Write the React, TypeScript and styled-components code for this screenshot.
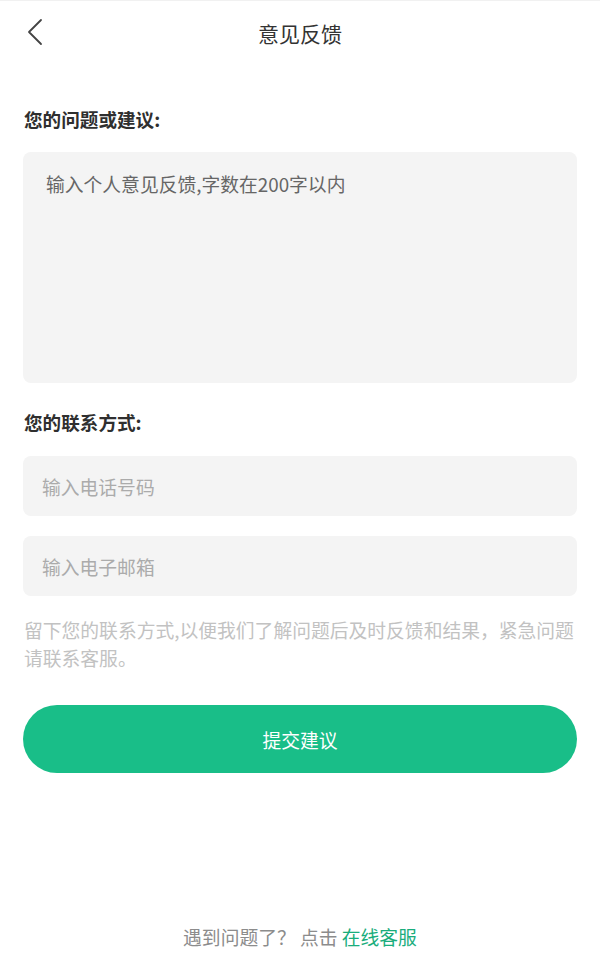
import React from "react";
import styled, { createGlobalStyle } from "styled-components";

const GlobalStyle = createGlobalStyle`
  html, body {
    margin: 0;
    padding: 0;
    background: #ffffff;
  }
  body {
    font-family: "Noto Sans CJK SC", "Noto Sans", sans-serif;
    -webkit-font-smoothing: antialiased;
  }
  * { box-sizing: border-box; }
`;

const Page = styled.div`
  width: 600px;
  min-height: 974px;
  display: flex;
  flex-direction: column;
  background: #fff;
  border-top: 1px solid #f1f1f1;
`;

const Header = styled.header`
  height: 63px;
  display: grid;
  grid-template-columns: 1fr auto 1fr;
  align-items: center;
`;

const BackButton = styled.button`
  justify-self: start;
  margin-left: 27px;
  margin-top: -1px;
  width: 16px;
  height: 28px;
  padding: 0;
  border: none;
  background: transparent;
  display: flex;
  cursor: pointer;
`;

const Title = styled.h1`
  margin: 0;
  font-size: 21px;
  line-height: 30px;
  font-weight: 400;
  color: #333;
`;

const Content = styled.main`
  padding: 0 23px;
  display: flex;
  flex-direction: column;
`;

const Label = styled.div<{ $top: number }>`
  margin-top: ${(p) => p.$top}px;
  font-size: 18.6px;
  line-height: 26px;
  font-weight: 700;
  color: #2f2f2f;
  padding-left: 1px;
`;

const TextArea = styled.textarea`
  margin-top: 20px;
  width: 100%;
  height: 231px;
  border: none;
  outline: none;
  resize: none;
  border-radius: 8px;
  background: #f4f4f4;
  padding: 19px 23px;
  font-family: inherit;
  font-size: 18.8px;
  line-height: 26px;
  color: #333;
  &::placeholder {
    color: #666;
  }
`;

const Input = styled.input<{ $top: number }>`
  margin-top: ${(p) => p.$top}px;
  width: 100%;
  height: 60px;
  border: none;
  outline: none;
  border-radius: 8px;
  background: #f4f4f4;
  padding: 0 19px;
  font-family: inherit;
  font-size: 18.8px;
  color: #333;
  &::placeholder {
    color: #ababab;
  }
`;

const Note = styled.p`
  margin: 20px 0 0;
  font-size: 18.8px;
  line-height: 28px;
  color: #c2c2c2;
  padding-left: 1px;
`;

const SubmitButton = styled.button`
  margin-top: 33px;
  width: 100%;
  height: 68px;
  border: none;
  border-radius: 34px;
  background: #19be88;
  color: #fff;
  font-family: inherit;
  font-size: 18.8px;
  cursor: pointer;
`;

const Footer = styled.footer`
  margin-top: auto;
  padding-bottom: 24px;
  text-align: center;
  font-size: 18.8px;
  line-height: 26px;
  color: #8c8c8c;
`;

const Link = styled.a`
  color: #1aad7c;
  text-decoration: none;
`;

export default function App() {
  return (
    <>
      <GlobalStyle />
      <Page>
        <Header>
          <BackButton aria-label="返回">
            <svg width="16" height="28" viewBox="0 0 16 28" fill="none">
              <path
                d="M14 2 L2 14 L14 26"
                stroke="#444"
                strokeWidth="1.8"
                strokeLinecap="round"
                strokeLinejoin="round"
              />
            </svg>
          </BackButton>
          <Title>意见反馈</Title>
          <div />
        </Header>
        <Content>
          <Label $top={42}>您的问题或建议:</Label>
          <TextArea placeholder="输入个人意见反馈,字数在200字以内" />
          <Label $top={26}>您的联系方式:</Label>
          <Input $top={21} placeholder="输入电话号码" />
          <Input $top={20} placeholder="输入电子邮箱" />
          <Note>
            留下您的联系方式,以便我们了解问题后及时反馈和结果，紧急问题请联系客服。
          </Note>
          <SubmitButton>提交建议</SubmitButton>
        </Content>
        <Footer>
          遇到问题了？ 点击 <Link href="#">在线客服</Link>
        </Footer>
      </Page>
    </>
  );
}
